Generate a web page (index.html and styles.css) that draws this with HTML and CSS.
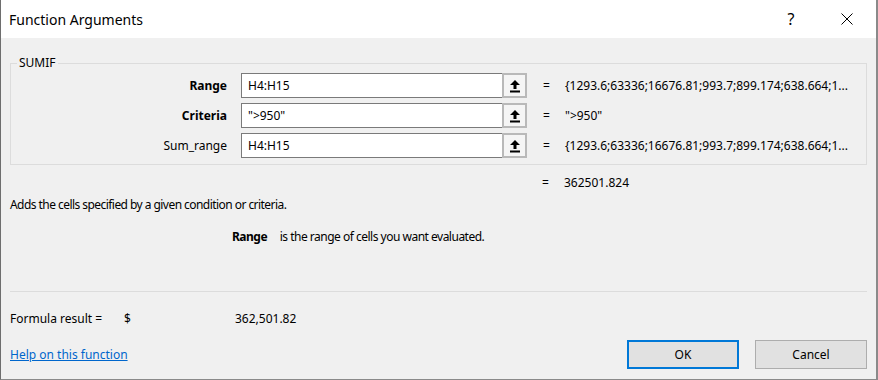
FILE: index.html
```html
<!DOCTYPE html>
<html lang="en">
<head>
    <meta charset="UTF-8">
    <title>Function Arguments</title>
    <link rel="stylesheet" href="styles.css">
</head>
<body>
    <div class="dialog">
        <header class="titlebar">
            <span class="title">Function Arguments</span>
            <span class="help-btn">?</span>
            <span class="close-btn">
                <svg width="12" height="12" viewBox="0 0 12 12"><path d="M0.5 0.5 L11.5 11.5 M11.5 0.5 L0.5 11.5" stroke="#000" stroke-width="1" fill="none"/></svg>
            </span>
        </header>
        <div class="content">
            <fieldset class="group">
                <legend>SUMIF</legend>
                <div class="arg-row">
                    <label class="arg-label bold">Range</label>
                    <div class="arg-input">H4:H15</div>
                    <span class="ref-btn">
                        <svg width="12" height="14" viewBox="0 0 12 14"><path d="M6 1 L11 6 L7.5 6 L7.5 10 L4.5 10 L4.5 6 L1 6 Z" fill="#000"/><rect x="1" y="11.5" width="10" height="2" fill="#000"/></svg>
                    </span>
                    <span class="eq">=</span>
                    <span class="arg-value">{1293.6;63336;16676.81;993.7;899.174;638.664;1...</span>
                </div>
                <div class="arg-row">
                    <label class="arg-label bold">Criteria</label>
                    <div class="arg-input">"&gt;950"</div>
                    <span class="ref-btn">
                        <svg width="12" height="14" viewBox="0 0 12 14"><path d="M6 1 L11 6 L7.5 6 L7.5 10 L4.5 10 L4.5 6 L1 6 Z" fill="#000"/><rect x="1" y="11.5" width="10" height="2" fill="#000"/></svg>
                    </span>
                    <span class="eq">=</span>
                    <span class="arg-value">"&gt;950"</span>
                </div>
                <div class="arg-row">
                    <label class="arg-label">Sum_range</label>
                    <div class="arg-input">H4:H15</div>
                    <span class="ref-btn">
                        <svg width="12" height="14" viewBox="0 0 12 14"><path d="M6 1 L11 6 L7.5 6 L7.5 10 L4.5 10 L4.5 6 L1 6 Z" fill="#000"/><rect x="1" y="11.5" width="10" height="2" fill="#000"/></svg>
                    </span>
                    <span class="eq">=</span>
                    <span class="arg-value">{1293.6;63336;16676.81;993.7;899.174;638.664;1...</span>
                </div>
            </fieldset>

            <div class="total-row">
                <span class="eq">=</span>
                <span class="arg-value">362501.824</span>
            </div>

            <p class="desc">Adds the cells specified by a given condition or criteria.</p>

            <div class="arg-help">
                <span class="bold">Range</span>
                <span class="arg-help-text">is the range of cells you want evaluated.</span>
            </div>

            <hr class="sep">

            <div class="result-row">
                <span class="result-label">Formula result =</span>
                <span class="result-cur">$</span>
                <span>362,501.82</span>
            </div>

            <div class="footer">
                <a href="#" class="help-link">Help on this function</a>
                <div class="buttons">
                    <button class="btn btn-default">OK</button>
                    <button class="btn">Cancel</button>
                </div>
            </div>
        </div>
    </div>
</body>
</html>
```

FILE: styles.css
```css
html, body {
    margin: 0;
    padding: 0;
}
body {
    font-family: "Noto Sans", "Open Sans", sans-serif;
    font-size: 12px;
    color: #000;
    background-color: #f0f0f0;
}
.dialog {
    width: 878px;
    height: 380px;
    box-sizing: border-box;
    border-left: 1px solid #6e6e6e;
    border-right: 2px solid #8a8a8a;
    border-bottom: 1px solid #8a8a8a;
    background-color: #f0f0f0;
    display: flex;
    flex-direction: column;
}
.bold {
    font-weight: bold;
}

/* title bar */
.titlebar {
    height: 38px;
    background-color: #fff;
    display: flex;
    align-items: center;
    padding-left: 8px;
}
.title {
    font-size: 14px;
    flex: 1;
}
.help-btn {
    font-size: 16px;
    width: 46px;
    text-align: center;
    margin-right: 10px;
}
.close-btn {
    width: 46px;
    display: flex;
    justify-content: center;
    margin-right: 6px;
}

/* body */
.content {
    padding: 0 9px;
    flex: 1;
    display: flex;
    flex-direction: column;
}
.group {
    margin: 17px 0 0;
    padding: 2px 0 6px;
    border: 1px solid #dcdcdc;
}
.group legend {
    margin-left: 6px;
    padding: 0 2px;
    line-height: 16px;
}
.arg-row {
    display: flex;
    align-items: center;
    height: 25px;
    margin-top: 5px;
}
.arg-row:first-of-type {
    margin-top: 0;
}
.arg-label {
    width: 216px;
    text-align: right;
    margin-right: 14px;
}
.arg-input {
    width: 254px;
    height: 23px;
    line-height: 23px;
    padding-left: 6px;
    background-color: #fff;
    border: 1px solid #7a7a7a;
    border-right: none;
}
.ref-btn {
    width: 21px;
    height: 21px;
    border: 2px solid #b9b9b9;
    background-color: #f5f5f5;
    display: flex;
    align-items: center;
    justify-content: center;
}
.eq {
    margin-left: 16px;
    width: 22px;
}
.arg-value {
    white-space: nowrap;
}
.total-row {
    display: flex;
    height: 18px;
    align-items: center;
    margin-top: 8px;
    padding-left: 516px;
}
.desc {
    margin: 5px 0 0;
    height: 18px;
    line-height: 18px;
    letter-spacing: -0.55px;
}
.arg-help {
    margin-top: 14px;
    padding-left: 222px;
    height: 18px;
    line-height: 18px;
    letter-spacing: -0.5px;
}
.arg-help-text {
    margin-left: 10px;
}
.sep {
    margin: 45px 0 0;
    border: none;
    border-top: 1px solid #dcdcdc;
}
.result-row {
    display: flex;
    margin-top: 18px;
    height: 18px;
    line-height: 18px;
}
.result-label {
    width: 114px;
}
.result-cur {
    width: 111px;
}
.footer {
    display: flex;
    align-items: center;
    justify-content: space-between;
    margin-top: 12px;
}
.help-link {
    color: #0066cc;
    text-decoration: underline;
}
.buttons {
    display: flex;
    gap: 16px;
}
.btn {
    width: 112px;
    height: 29px;
    font-family: inherit;
    font-size: 12px;
    color: #000;
    background-color: #e1e1e1;
    border: 1px solid #adadad;
    padding: 0;
}
.btn-default {
    border: 2px solid #0078d7;
}
```
